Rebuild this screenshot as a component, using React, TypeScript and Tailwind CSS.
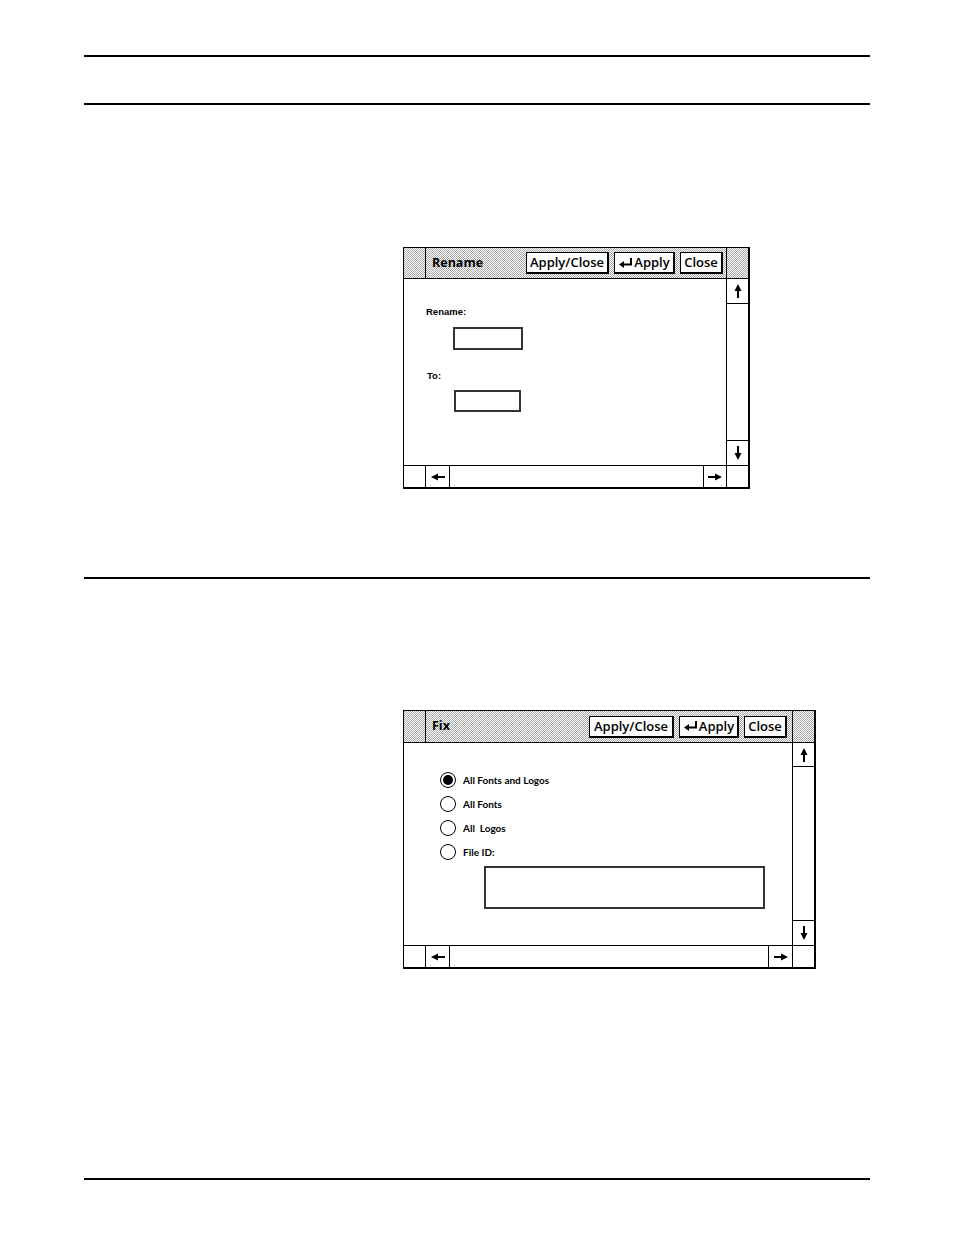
import React from "react";

function Hatch() {
  return (
    <svg className="absolute inset-0 w-full h-full" shapeRendering="crispEdges" aria-hidden>
      <defs>
        <pattern id="hatch" width="2" height="2" patternUnits="userSpaceOnUse">
          <rect x="0" y="0" width="2" height="2" fill="#ffffff" />
          <rect x="0" y="0" width="1" height="1" fill="#a6a6a6" />
          <rect x="1" y="1" width="1" height="1" fill="#a6a6a6" />
        </pattern>
      </defs>
      <rect width="100%" height="100%" fill="url(#hatch)" />
    </svg>
  );
}

function ReturnArrow() {
  return (
    <svg width="15" height="10" viewBox="0 0 15 10" className="mr-[1px]">
      <path d="M13 0 V6.5 H5" stroke="black" strokeWidth="2" fill="none" />
      <path d="M1 6.5 L6 3 L6 10 Z" fill="black" />
    </svg>
  );
}

function Arrow({ dir }: { dir: "up" | "down" | "left" | "right" }) {
  if (dir === "up" || dir === "down") {
    return (
      <svg width="8" height="14" viewBox="0 0 8 14">
        <g transform={dir === "down" ? "rotate(180 4 7)" : undefined}>
          <path d="M4 0 L7.5 7 L0.5 7 Z" fill="black" />
          <rect x="3" y="5" width="2" height="9" fill="black" />
        </g>
      </svg>
    );
  }
  return (
    <svg width="14" height="8" viewBox="0 0 14 8">
      <g transform={dir === "right" ? "rotate(180 7 4)" : undefined}>
        <path d="M0 4 L7 0.5 L7 7.5 Z" fill="black" />
        <rect x="5" y="3" width="9" height="2" fill="black" />
      </g>
    </svg>
  );
}

function Btn({ w, children }: { w: string; children: React.ReactNode }) {
  return (
    <div
      className={`${w} h-[22px] bg-white border border-black border-r-2 border-b-2 flex items-center justify-center text-[13px] font-semibold leading-none text-black`}
      style={{ fontFamily: '"Open Sans", sans-serif' }}
    >
      {children}
    </div>
  );
}

function Window({
  w,
  h,
  titleH,
  upH,
  downH,
  rightArrowW,
  title,
  btnW,
  btnMr,
  children,
}: {
  w: string;
  h: string;
  titleH: string;
  upH: string;
  downH: string;
  rightArrowW: string;
  title: string;
  btnW: [string, string, string];
  btnMr: string;
  children: React.ReactNode;
}) {
  return (
    <div
      className={`${w} ${h} bg-white border-l border-t border-black border-r-2 border-b-2 flex flex-col`}
    >
      <div className={`${titleH} flex border-b border-black shrink-0`}>
        <div className="w-[22px] border-r border-black relative">
          <Hatch />
        </div>
        <div className="flex-1 relative">
          <Hatch />
          <div className="relative h-full flex items-center">
            <span
              className="pl-[6px] text-[12.5px] font-bold text-black"
              style={{ fontFamily: '"Open Sans", sans-serif' }}
            >
              {title}
            </span>
            <div className="flex-1" />
            <div className={`flex gap-[5px] ${btnMr}`}>
              <Btn w={btnW[0]}>Apply/Close</Btn>
              <Btn w={btnW[1]}>
                <ReturnArrow />
                Apply
              </Btn>
              <Btn w={btnW[2]}>Close</Btn>
            </div>
          </div>
        </div>
        <div className="w-[22px] border-l border-black relative">
          <Hatch />
        </div>
      </div>
      <div className="flex-1 flex min-h-0">
        <div className="flex-1">{children}</div>
        <div className="w-[22px] border-l border-black flex flex-col">
          <div className={`${upH} border-b border-black flex items-center justify-center`}>
            <Arrow dir="up" />
          </div>
          <div className="flex-1" />
          <div className={`${downH} border-t border-black flex items-center justify-center`}>
            <Arrow dir="down" />
          </div>
        </div>
      </div>
      <div className="h-[22px] border-t border-black flex shrink-0">
        <div className="w-[22px] border-r border-black" />
        <div className="w-[24px] border-r border-black flex items-center justify-center">
          <Arrow dir="left" />
        </div>
        <div className="flex-1" />
        <div className={`${rightArrowW} border-l border-black flex items-center justify-center`}>
          <Arrow dir="right" />
        </div>
        <div className="w-[22px] border-l border-black" />
      </div>
    </div>
  );
}

function Radio({ on, label }: { on?: boolean; label: string }) {
  return (
    <div className="flex items-center h-[24px]">
      <div className="w-[16px] h-[16px] rounded-full border-[1.5px] border-black flex items-center justify-center">
        {on && <div className="w-[10px] h-[10px] rounded-full bg-black" />}
      </div>
      <span
        className="ml-[7px] text-[10px] font-bold text-black whitespace-pre"
        style={{ fontFamily: "Lato, sans-serif" }}
      >
        {label}
      </span>
    </div>
  );
}

export default function App() {
  return (
    <div className="w-[954px] h-[1235px] bg-white">
      <div className="mx-[84px] pt-[55px]">
        <div className="h-[2px] bg-black" />
        <div className="h-[2px] bg-black mt-[46px]" />
        <div className="mt-[142px] ml-[319px]">
          <Window
            w="w-[347px]"
            h="h-[242px]"
            titleH="h-[31px]"
            upH="h-[25px]"
            downH="h-[25px]"
            rightArrowW="w-[23px]"
            title="Rename"
            btnW={["w-[83px]", "w-[61px]", "w-[43px]"]}
            btnMr="mr-[3px]"
          >
            <div
              className="pl-[22px] pt-[27px] flex flex-col"
              style={{ fontFamily: '"Liberation Sans", Arial, sans-serif' }}
            >
              <span className="text-[9.5px] font-bold text-black leading-[12px]">Rename:</span>
              <div className="ml-[27px] mt-[9px] w-[70px] h-[23px] border-2 border-[#333]" />
              <span className="ml-[1px] mt-[20px] text-[9.5px] font-bold text-black leading-[12px]">To:</span>
              <div className="ml-[28px] mt-[8px] w-[67px] h-[22px] border-2 border-[#333]" />
            </div>
          </Window>
        </div>
        <div className="h-[2px] bg-black mt-[88px]" />
        <div className="mt-[131px] ml-[319px]">
          <Window
            w="w-[413px]"
            h="h-[259px]"
            titleH="h-[32px]"
            upH="h-[24px]"
            downH="h-[25px]"
            rightArrowW="w-[24px]"
            title="Fix"
            btnW={["w-[85px]", "w-[60px]", "w-[43px]"]}
            btnMr="mr-[5px]"
          >
            <div className="pl-[36px] pt-[25px] flex flex-col">
              <Radio on label="All Fonts and Logos" />
              <Radio label="All Fonts" />
              <Radio label="All  Logos" />
              <Radio label="File ID:" />
              <div className="ml-[44px] mt-[2px] w-[281px] h-[43px] border-2 border-[#333]" />
            </div>
          </Window>
        </div>
        <div className="h-[2px] bg-black mt-[209px]" />
      </div>
    </div>
  );
}
